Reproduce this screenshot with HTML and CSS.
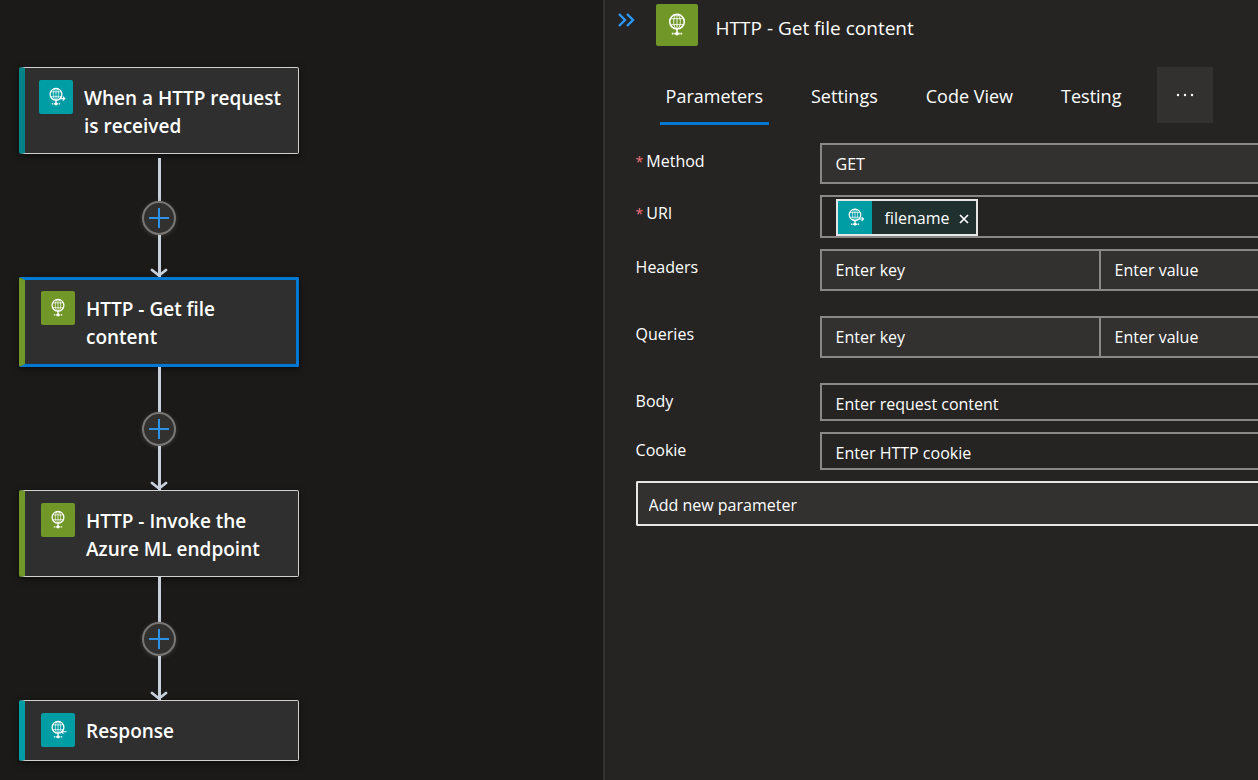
FILE: index.html
```html
<!DOCTYPE html>
<html lang="en">
<head>
<meta charset="utf-8">
<title>Logic app designer</title>
<link rel="stylesheet" href="styles.css">
</head>
<body>
<svg class="defs" aria-hidden="true">
  <symbol id="globe" viewBox="0 0 34 34">
    <g fill="none" stroke="#fff">
      <circle cx="17" cy="14.3" r="5.9" stroke-width="1.3"/>
      <g stroke-width=".7">
        <ellipse cx="17" cy="14.3" rx="2.7" ry="5.9"/>
        <path d="M12 11.9h10M12 16.7h10M17 8.4v11.8"/>
      </g>
      <path d="M17 20v3.6" stroke-width="1.3"/>
      <path d="M12.8 23.9h1.4M14.8 23.9h4.4M19.8 23.9h1.4" stroke-width="1.4"/>
    </g>
    <circle cx="17" cy="24" r="1.4" fill="#fff"/>
  </symbol>
  <symbol id="globe-out" viewBox="0 0 34 34">
    <use href="#globe"/>
    <path d="M20.5 18.6h5M23.8 16.6l2 2-2 2" fill="none" stroke="#fff" stroke-width="1.1"/>
  </symbol>
  <symbol id="globe-in" viewBox="0 0 34 34">
    <use href="#globe"/>
    <path d="M25.5 18.7h-5M22.4 16.7l-2 2 2 2" fill="none" stroke="#fff" stroke-width="1.1"/>
  </symbol>
</svg>
<div class="designer">
  <main class="canvas">
    <div class="flow">
      <button class="card trigger"><span class="icon teal"><svg><use href="#globe-out"/></svg></span><span class="title">When a HTTP request is received</span></button>
      <div class="connector detached">
        <span class="line"></span>
        <button class="add" aria-label="Insert a new step"><svg viewBox="0 0 20 20"><path d="M10 0v20M0 10h20"/></svg></button>
        <span class="line"></span>
        <svg class="arrow" viewBox="0 0 18 9"><path d="M2 2l7 5.5L16 2"/></svg>
      </div>
      <button class="card action selected"><span class="icon green"><svg><use href="#globe"/></svg></span><span class="title">HTTP - Get file content</span></button>
      <div class="connector">
        <span class="line"></span>
        <button class="add" aria-label="Insert a new step"><svg viewBox="0 0 20 20"><path d="M10 0v20M0 10h20"/></svg></button>
        <span class="line"></span>
        <svg class="arrow" viewBox="0 0 18 9"><path d="M2 2l7 5.5L16 2"/></svg>
      </div>
      <button class="card action"><span class="icon green"><svg><use href="#globe"/></svg></span><span class="title">HTTP - Invoke the Azure ML endpoint</span></button>
      <div class="connector">
        <span class="line"></span>
        <button class="add" aria-label="Insert a new step"><svg viewBox="0 0 20 20"><path d="M10 0v20M0 10h20"/></svg></button>
        <span class="line"></span>
        <svg class="arrow" viewBox="0 0 18 9"><path d="M2 2l7 5.5L16 2"/></svg>
      </div>
      <button class="card action response"><span class="icon teal"><svg><use href="#globe-in"/></svg></span><span class="title">Response</span></button>
    </div>
  </main>
  <aside class="panel">
    <header class="panel-head">
      <button class="collapse" aria-label="Collapse panel"><svg viewBox="0 0 18 14"><path d="M2 1l6 6-6 6M10 1l6 6-6 6"/></svg></button>
      <span class="icon green large"><svg><use href="#globe"/></svg></span>
      <h1>HTTP - Get file content</h1>
    </header>
    <nav class="tabs">
      <button class="tab active">Parameters</button>
      <button class="tab">Settings</button>
      <button class="tab">Code View</button>
      <button class="tab">Testing</button>
      <button class="more" aria-label="More tabs"><svg viewBox="0 0 18 4"><circle cx="2" cy="2" r="1.2"/><circle cx="9" cy="2" r="1.2"/><circle cx="16" cy="2" r="1.2"/></svg></button>
    </nav>
    <form class="form">
      <div class="row">
        <label for="method"><span class="req">*</span>Method</label>
        <input class="field filled method" id="method" value="GET">
      </div>
      <div class="row">
        <label for="uri"><span class="req">*</span>URI</label>
        <div class="field token-field">
          <span class="token"><span class="token-icon teal"><svg><use href="#globe-out"/></svg></span><span class="token-name">filename</span><button type="button" class="remove" aria-label="Remove filename"><svg viewBox="0 0 10 10"><path d="M1 1l8 8M9 1l-8 8"/></svg></button></span>
          <input class="bare" id="uri">
        </div>
      </div>
      <div class="row spaced">
        <label for="hkey">Headers</label>
        <div class="pair"><input class="field filled" id="hkey" placeholder="Enter key"><input class="field filled" aria-label="Header value" placeholder="Enter value"></div>
      </div>
      <div class="row spaced">
        <label for="qkey">Queries</label>
        <div class="pair"><input class="field filled" id="qkey" placeholder="Enter key"><input class="field filled" aria-label="Query value" placeholder="Enter value"></div>
      </div>
      <div class="row">
        <label for="body">Body</label>
        <input class="field short" id="body" placeholder="Enter request content">
      </div>
      <div class="row">
        <label for="cookie">Cookie</label>
        <input class="field short" id="cookie" placeholder="Enter HTTP cookie">
      </div>
      <input class="new-param" aria-label="Add new parameter" placeholder="Add new parameter">
    </form>
  </aside>
</div>
</body>
</html>
```
FILE: styles.css
```css
* { box-sizing: border-box; }
body {
  margin: 0;
  background: #1b1a19;
  color: #fff;
  font-family: "Open Sans", "Noto Sans", sans-serif;
  font-size: 16px;
}
button, input { font: inherit; color: inherit; }
button { border: 0; padding: 0; background: none; cursor: pointer; }
svg { display: block; }
.defs { position: absolute; width: 0; height: 0; }

.designer { display: grid; grid-template-columns: 47.9% 1fr; min-height: 100vh; }

/* Workflow canvas */
.canvas { padding: 67px 19px 20px; }
.flow { width: 280px; display: flex; flex-direction: column; }
.card {
  display: flex;
  align-items: flex-start;
  gap: 11px;
  min-height: 59px;
  padding: 12px 14px 13px 16px;
  text-align: left;
  background: #2f2f2f;
  border: 1px solid #d2d0ce;
  border-left: 6px solid #709727;
  border-radius: 2px;
  box-shadow: 0 2px 6px #0008;
}
.trigger { border-left-color: #038387; padding-left: 14px; }
.response { border-left-color: #009da5; }
.selected { border: 3px solid #0078d4; border-left: 6px solid #709727; padding-top: 11px; }
.icon { flex: none; width: 34px; height: 34px; border-radius: 2px; }
.icon svg, .token-icon svg { width: 100%; height: 100%; }
.teal { background: #009da5; }
.green { background: #709727; }
.title { font-size: 19px; line-height: 28px; font-weight: 600; padding-top: 4px; }
.connector { position: relative; height: 123px; display: flex; flex-direction: column; align-items: center; }
.detached { padding-top: 4px; }
.line { flex: 1; width: 3px; background: #c8d0dc; }
.add {
  width: 34px;
  height: 34px;
  display: grid;
  place-items: center;
  border: 2px solid #797775;
  border-radius: 50%;
  background: #323130;
  box-shadow: 0 1px 4px #605e5c80;
}
.add svg { width: 20px; height: 20px; }
.add path { stroke: #2e93e8; stroke-width: 2; }
.arrow { position: absolute; bottom: 0; width: 18px; height: 9px; }
.arrow path { fill: none; stroke: #c8d0dc; stroke-width: 2.8; stroke-linecap: round; stroke-linejoin: round; }

/* Details panel */
.panel { background: #252423; border-left: 2px solid #323130; min-width: 0; overflow: hidden; }
.panel-head { display: flex; align-items: flex-start; padding: 4px 16px 0 12px; }
.collapse { padding-top: 9px; margin-right: 21px; }
.collapse svg { width: 18px; height: 14px; }
.collapse path { fill: none; stroke: #2899f5; stroke-width: 2.4; }
.large { width: 42px; height: 42px; }
h1 { margin: 0 0 0 18px; font-size: 19px; line-height: 48px; font-weight: 400; }
.tabs { display: flex; align-items: flex-start; gap: 36px; padding: 15px 0 0 55px; }
.tab { height: 58px; padding: 2px 6px 0; font-size: 18px; border-bottom: 3px solid transparent; white-space: nowrap; }
.active { border-bottom-color: #0078d4; }
.more { width: 56px; height: 56px; background: #323130; display: grid; place-items: center; margin-left: -6px; }
.more svg { width: 18px; height: 4px; fill: #fff; }
.form { display: flex; flex-direction: column; padding: 18px 0 0 31px; }
.row { display: grid; grid-template-columns: 184px 1fr; margin-bottom: 11px; align-items: start; }
.spaced { margin-bottom: 25px; }
label { line-height: 36px; }
.req { color: #f1707b; margin-right: 3px; font-size: 14px; }
.field {
  width: 100%;
  min-width: 0;
  height: 42px;
  padding: 0 14px;
  border: 2px solid #8a8886;
  border-right: 0;
  border-radius: 0;
  background: #252423;
}
.filled { background: #323130; }
.method { height: 41px; }
.short { height: 38px; padding-top: 4px; }
input::placeholder { color: #fff; opacity: 1; }
input { outline: 0; }
.pair { display: grid; grid-template-columns: 279px 1fr; }
.token-field { height: 43px; display: flex; align-items: flex-end; }
.token { flex: none; display: flex; align-items: center; height: 37px; border: 2px solid #e6e6e6; background: #20302f; }
.token-icon { width: 34px; height: 33px; }
.token-name { padding-left: 13px; }
.remove { padding: 2px 7px 0 9px; }
.remove svg { width: 10px; height: 10px; }
.remove path { stroke: #fff; stroke-width: 1.7; }
.bare { flex: 1; min-width: 0; border: 0; background: none; }
.new-param {
  height: 45px;
  padding: 2px 11px 0;
  background: #323130;
  border: 2px solid #e6e6e6;
  border-right: 0;
  border-radius: 2px 0 0 2px;
}
```
